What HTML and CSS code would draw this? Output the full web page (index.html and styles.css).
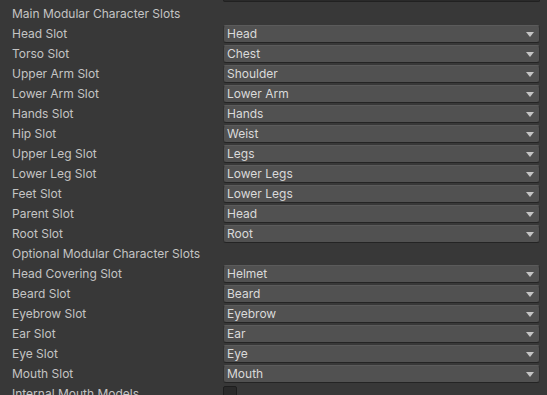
FILE: index.html
```html
<!DOCTYPE html>
<html lang="en">

<head>
  <meta charset="UTF-8" />
  <meta name="viewport" content="width=device-width, initial-scale=1" />
  <title>Modular Character Inspector</title>
  <link rel="stylesheet" href="styles.css">
</head>

<body>

  <div class="inspector">
    <div class="fields">
      <div class="top-edge"></div>

      <div class="row"><span class="label">Main Modular Character Slots</span></div>
      <div class="row"><span class="label">Head Slot</span><div class="popup">Head</div></div>
      <div class="row"><span class="label">Torso Slot</span><div class="popup">Chest</div></div>
      <div class="row"><span class="label">Upper Arm Slot</span><div class="popup">Shoulder</div></div>
      <div class="row"><span class="label">Lower Arm Slot</span><div class="popup">Lower Arm</div></div>
      <div class="row"><span class="label">Hands Slot</span><div class="popup">Hands</div></div>
      <div class="row"><span class="label">Hip Slot</span><div class="popup">Weist</div></div>
      <div class="row"><span class="label">Upper Leg Slot</span><div class="popup">Legs</div></div>
      <div class="row"><span class="label">Lower Leg Slot</span><div class="popup">Lower Legs</div></div>
      <div class="row"><span class="label">Feet Slot</span><div class="popup">Lower Legs</div></div>
      <div class="row"><span class="label">Parent Slot</span><div class="popup">Head</div></div>
      <div class="row"><span class="label">Root Slot</span><div class="popup">Root</div></div>

      <div class="row"><span class="label">Optional Modular Character Slots</span></div>
      <div class="row"><span class="label">Head Covering Slot</span><div class="popup">Helmet</div></div>
      <div class="row"><span class="label">Beard Slot</span><div class="popup">Beard</div></div>
      <div class="row"><span class="label">Eyebrow Slot</span><div class="popup">Eyebrow</div></div>
      <div class="row"><span class="label">Ear Slot</span><div class="popup">Ear</div></div>
      <div class="row"><span class="label">Eye Slot</span><div class="popup">Eye</div></div>
      <div class="row"><span class="label">Mouth Slot</span><div class="popup">Mouth</div></div>
      <div class="row"><span class="label">Internal Mouth Models</span><div class="checkbox"></div></div>
    </div>
    <div class="scrollbar"></div>
  </div>

</body>

</html>
```

FILE: styles.css
```css
/* Unity dark inspector look */
body {
  margin: 0;
  background: #383838;
  font-family: Inter, 'Noto Sans', sans-serif;
  font-size: 12px;
  color: #c4c4c4;
  overflow: hidden;
}

.inspector {
  display: flex;
  height: 395px;
}

.fields {
  flex: 1;
  padding-left: 12px;
}

/* bottom of the field scrolled above */
.top-edge {
  margin-left: 211px;
  width: 315px;
  height: 1px;
  background: #2a2a2a;
  border: 1px solid #212121;
  border-top: none;
  border-radius: 0 0 3px 3px;
  margin-right: 7px;
  box-sizing: content-box;
}

.row {
  display: flex;
  align-items: center;
  height: 20px;
  margin-right: 7px;
}

.row:nth-child(2) {
  margin-top: 2px;
}

.label {
  width: 211px;
  flex-shrink: 0;
  white-space: nowrap;
  line-height: 20px;
}

.popup {
  position: relative;
  flex: 1;
  height: 16px;
  line-height: 16px;
  padding-left: 3px;
  background: #515151;
  border: 1px solid #303030;
  border-top-color: #5b5b5b;
  border-bottom-color: #242424;
  border-radius: 3px;
  color: #dadada;
}

/* dropdown arrow */
.popup::after {
  content: '';
  position: absolute;
  right: 5px;
  top: 6px;
  border-left: 4px solid transparent;
  border-right: 4px solid transparent;
  border-top: 5px solid #c4c4c4;
}

.checkbox {
  align-self: flex-start;
  width: 12px;
  height: 12px;
  margin-top: 2px;
  background: #2a2a2a;
  border: 1px solid #1e1e1e;
  border-radius: 2px;
}

.scrollbar {
  width: 2px;
  border-left: 1px solid #4c4c4c;
  background: #2e2e2e;
}
```
